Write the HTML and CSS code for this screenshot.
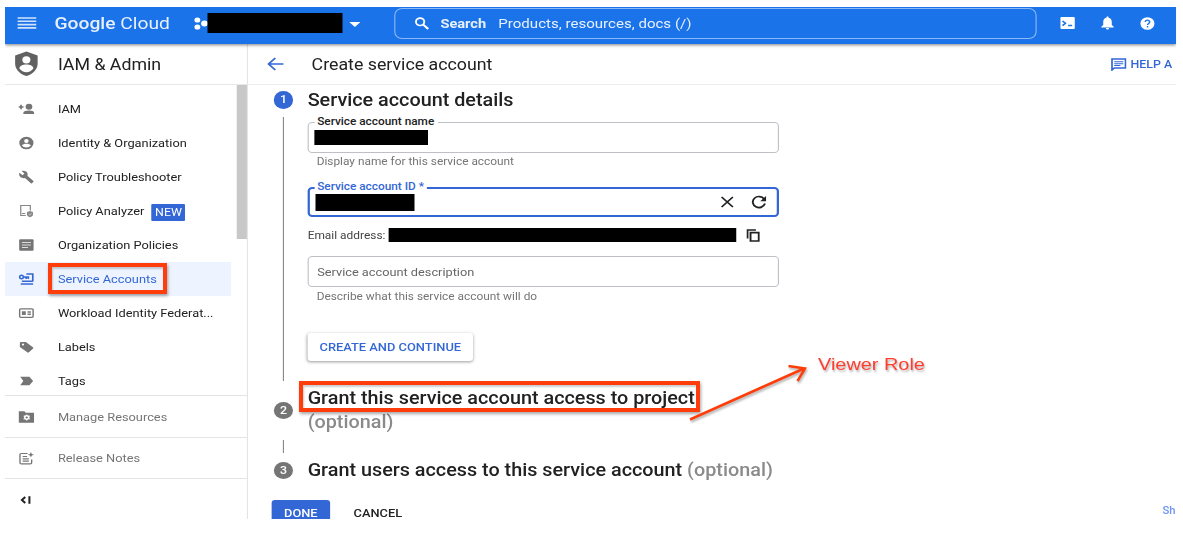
FILE: index.html
```html
<!DOCTYPE html>
<html lang="en">
<head>
<meta charset="utf-8">
<title>Create service account</title>
<link rel="stylesheet" href="styles.css">
</head>
<body>
<div class="console">
  <header class="topbar">
    <svg class="burger" width="17" height="12" viewBox="0 0 17 12"><path d="M0 1h17M0 4.300h17M0 7.600h17M0 10.900h17" stroke="#d2e3fc" stroke-width="1.600"/></svg>
    <div class="brand"><span class="t"><b>Google</b> Cloud</span></div>
    <svg class="dots" width="13" height="13" viewBox="0 0 13 13" fill="#fff"><circle cx="3" cy="3" r="2.600"/><circle cx="3" cy="10" r="2.600"/><circle cx="9.300" cy="6.500" r="3"/></svg>
    <div class="redact project"></div>
    <svg class="caret" width="10" height="5" viewBox="0 0 10 5"><path d="M0 0h10L5 5z" fill="#fff"/></svg>
    <div class="search">
      <svg width="13" height="13" viewBox="0 0 13 13" fill="none" stroke="#fff"><circle cx="5" cy="4.800" r="3.700" stroke-width="1.700"/><path d="M7.800 7.600l4.400 4.400" stroke-width="2"/></svg>
      <b class="t">Search</b><span class="t">Products, resources, docs (/)</span>
    </div>
    <svg class="shell" width="13" height="12" viewBox="0 0 13 12"><rect width="13" height="12" rx="1" fill="#fff"/><path d="M2 4l2.600 2.300L2 8.600" fill="none" stroke="#1a73e8" stroke-width="1.500"/><path d="M7 8.500h3.600" stroke="#1a73e8" stroke-width="1.500"/></svg>
    <svg class="bell" width="12" height="14" viewBox="0 0 12 14"><path d="M6 0.600c.7 0 1 .5 1 1.100C9 2.200 9.800 3.900 9.800 5.900v3.200l1.700 1.600v.7H.5v-.7l1.700-1.600V5.900c0-2 .8-3.700 2.800-4.200 0-.6.3-1.100 1-1.100zM4.700 12h2.600c0 1-.5 1.500-1.300 1.500S4.700 13 4.700 12z" fill="#fff"/></svg>
    <svg class="help" width="13" height="13" viewBox="0 0 13 13"><circle cx="6.500" cy="6.500" r="6.300" fill="#fff"/><path d="M4.600 5.100c0-2.600 3.900-2.500 3.900-.1 0 1.400-1.900 1.500-1.900 3M6.600 9v1.400" fill="none" stroke="#1a73e8" stroke-width="1.300"/></svg>
  </header>
  <div class="columns">
    <nav class="sidebar">
      <div class="product">
        <svg width="22" height="26" viewBox="0 0 22 26"><path d="M11 .5L21 4.400v8.100c0 6-4.200 10.700-10 12.500C5.200 23.200 1 18.500 1 12.500V4.400z" fill="#616161"/><circle cx="11" cy="8.800" r="3.600" fill="#fff"/><path d="M4.800 17.500c0-5.200 12.400-5.200 12.400 0-1.500 2.300-3.700 3.700-6.200 3.700s-4.700-1.400-6.200-3.700z" fill="#fff"/></svg>
        <span class="t">IAM &amp; Admin</span>
      </div>
      <div class="menu">
        <div class="items">
          <div class="item"><svg viewBox="0 0 14 14" fill="#757575"><circle cx="9.300" cy="4.800" r="3"/><path d="M4.300 12V10.800c0-3 9.700-3 9.700 0V12zM0 4.300h1.500V2.800h1.500v1.500h1.500v1.500H3v1.500H1.500V5.800H0z"/></svg><span class="t">IAM</span></div>
          <div class="item"><svg viewBox="0 0 14 14"><circle cx="7" cy="7" r="6.300" fill="#757575"/><circle cx="7" cy="5" r="2" fill="#fff"/><path d="M3 9.500c1-2.300 7-2.300 8 0-1.800 2.500-6.200 2.500-8 0z" fill="#fff"/></svg><span class="t">Identity &amp; Organization</span></div>
          <div class="item"><svg viewBox="0 0 24 24" fill="#757575"><path d="M22.700 19l-9.100-9.100c.9-2.300.4-5-1.500-6.900-2-2-5-2.400-7.400-1.300L9 6 6 9 1.600 4.700C.4 7.100.9 10.100 2.900 12.100c1.900 1.900 4.600 2.400 6.900 1.500l9.100 9.100c.4.4 1 .4 1.400 0l2.300-2.300c.5-.4.5-1.100.1-1.400z"/></svg><span class="t">Policy Troubleshooter</span></div>
          <div class="item"><svg viewBox="0 0 14 14" fill="none" stroke="#888"><path d="M6.500 11.500H2v-10h8.500v5M3 9.500h3" stroke-width="1.100"/><path d="M7.500 8l2.700-1 2.700 1v2.500c0 1.500-1.300 2.300-2.700 2.800-1.400-.5-2.700-1.300-2.700-2.800z" fill="#888" stroke="none"/><path d="M9 10l1 1 1.600-1.700" stroke="#fff" stroke-width=".5"/></svg><span class="t">Policy Analyzer</span><span class="badge"><span class="t">NEW</span></span></div>
          <div class="item"><svg viewBox="0 0 14 14"><rect x=".6" y="1.300" width="12.800" height="11.500" rx="1" fill="#757575"/><path d="M3 4.500h8M3 7h8M3 9.500h5.500" stroke="#ddd"/></svg><span class="t">Organization Policies</span></div>
          <div class="item active"><svg viewBox="0 0 14 14" fill="none" stroke="#3367d6" stroke-width="1.500"><circle cx="2.700" cy="5" r="1.700"/><path d="M4.500 5h4.200v2M6.800 5v2M7 2h5.700v7.500M3 9.200h9.700M2 12h11"/></svg><span class="t">Service Accounts</span></div>
          <div class="item"><svg viewBox="0 0 14 14"><rect x="1" y="2.800" width="12" height="8.500" rx="1" fill="none" stroke="#777" stroke-width="1.300"/><path d="M3 5.300h3.500V9H3zM8 5.300h3v1.400H8zM8 7.600h3V9H8z" fill="#777"/></svg><span class="t">Workload Identity Federat...</span></div>
          <div class="item"><svg viewBox="0 0 14 14"><path d="M1.200 3.300c0-.8.500-1.300 1.300-1.300h4.100l6.200 5.300c.5.500.5 1 0 1.500l-3.500 3.500c-.5.500-1 .5-1.500 0L1.200 7z" fill="#757575"/><circle cx="4" cy="4.500" r="1" fill="#fff"/></svg><span class="t">Labels</span></div>
          <div class="item"><svg viewBox="0 0 14 14"><path d="M1.500 2.700h8.200L13 7l-3.300 4.300H1.500L4.300 7z" fill="#757575"/></svg><span class="t">Tags</span></div>
        </div>
        <div class="scroll"></div>
      </div>
      <div class="foot"><svg viewBox="0 0 14 14"><path d="M.1 1.200h5.100l1.300 1.500h7.400v10H.1z" fill="#757575"/><circle cx="7.300" cy="7.500" r="1.700" fill="none" stroke="#fff" stroke-width="1.400"/><path d="M7.300 4.500v1.200M7.300 9.300v1.200M4.600 5.900l1 .6M9.100 8.500l1 .6M10.100 5.900l-1 .6M5.500 8.500l-1 .6" stroke="#fff"/></svg><span class="t">Manage Resources</span></div>
      <div class="foot"><svg viewBox="0 0 14 14" fill="none" stroke="#757575" stroke-width="1.200"><path d="M8 2.500H2.500c-.8 0-1.200.4-1.200 1.200v8c0 .8.400 1.200 1.200 1.200h8c.8 0 1.200-.4 1.200-1.200V8.500M3.700 5.500h4M3.700 7.800h5.500M3.700 10.200h5.500"/><path d="M11 1l.8 2 2 .8-2 .8-.8 2-.8-2-2-.8 2-.8z" fill="#757575" stroke="none"/></svg><span class="t">Release Notes</span></div>
      <div class="foot last"><svg viewBox="0 0 14 14" fill="none" stroke="#222" stroke-width="1.800"><path d="M6 4L3 7l3 3M9.700 3.300v7.400"/></svg></div>
    </nav>
    <main class="main">
      <div class="pagehead">
        <svg width="15" height="14" viewBox="0 0 15 14" fill="none" stroke="#3367d6" stroke-width="1.700"><path d="M14.500 7H1.500M7.300 1L1.300 7l6 6"/></svg>
        <span class="t title">Create service account</span>
        <svg class="chat" width="14" height="13" viewBox="0 0 14 13" fill="none" stroke="#3367d6"><path d="M1 12V1h12v9H3z" stroke-width="1.500"/><path d="M3 3.800h8M3 5.700h8M3 7.600h5.500"/></svg>
        <span class="t assist">HELP A</span>
      </div>
      <div class="stepper">
        <div class="rail"><i class="num on">1</i><i class="line"></i></div>
        <section class="details">
          <h2><span class="t">Service account details</span></h2>
          <div class="field"><label class="t">Service account name</label><div class="redact name"></div></div>
          <p class="hint first"><span class="t">Display name for this service account</span></p>
          <div class="field focus"><label class="t">Service account ID *</label><div class="redact ident"></div>
            <svg width="12" height="12" viewBox="0 0 12 12" stroke="#222" stroke-width="1.600"><path d="M1 1l10 10M11 1L1 11"/></svg>
            <svg class="reload" width="14" height="14" viewBox="0 0 14 14" fill="none" stroke="#222" stroke-width="1.700"><path d="M11.800 4A5.500 5.500 0 1 0 12.500 8.500"/><path d="M13.500 1v5.300H8.300z" fill="#222" stroke="none"/></svg>
          </div>
          <p class="email"><span class="t">Email address:</span><span class="redact mail"></span><svg width="12" height="13" viewBox="0 0 12 13" fill="none" stroke="#222" stroke-width="1.700"><path d="M1 9.500V1h7.500M3.700 3.700H11v8.300H3.700z"/></svg></p>
          <div class="field empty"><span class="t">Service account description</span></div>
          <p class="hint"><span class="t">Describe what this service account will do</span></p>
          <div class="continue"><span class="t">CREATE AND CONTINUE</span></div>
        </section>
        <div class="rail second"><i class="num">2</i><i class="line"></i></div>
        <section class="grant"><h2><span class="t">Grant this service account access to project</span><br><span class="t opt">(optional)</span></h2></section>
        <div class="rail"><i class="num">3</i></div>
        <section class="users"><h2 class="t">Grant users access to this service account <span class="opt">(optional)</span></h2></section>
      </div>
      <div class="actions"><div class="done"><span class="t">DONE</span></div><span class="t cancel">CANCEL</span><span class="t shortcut">Sh</span></div>
    </main>
  </div>
</div>
<div class="mark mark-account"></div>
<div class="mark mark-grant"></div>
<svg class="arrow" width="130" height="66" viewBox="0 0 130 66" fill="none" stroke="#ff3d0a" stroke-width="2.500"><path d="M5 59.500L119 8.500M103.500 6L120 8.500 112.500 21"/></svg>
<div class="note t">Viewer Role</div>
</body>
</html>
```
FILE: styles.css
```css
* { box-sizing: border-box; }
body { margin: 0; background: #fff; font-family: Roboto, "Liberation Sans", sans-serif; color: #212121; position: relative; }
svg { flex: none; display: block; }
.t { white-space: nowrap; }

/* The console is laid out at 1040px and widened horizontally. */
.console { width: 1040.500px; height: 511.500px; margin: 7px 0 0 5px; transform: scaleX(1.125); transform-origin: 0 0; overflow: hidden; display: flex; flex-direction: column; }
.redact { background: #000; flex: none; }

.topbar { height: 37px; flex: none; background: #1a73e8; color: #e8f0fe; display: flex; align-items: center; padding: 0 0 5px 11px; position: relative; z-index: 1; box-shadow: 0 1px 3px rgba(0,0,0,.5); }
.brand { margin-left: 16px; width: 124px; font-size: 17.100px; }
.brand b { font-weight: 500; }
.project { width: 120px; height: 20px; margin-left: -1px; }
.caret { margin-left: 6px; margin-top: 2px; }
.search { margin-left: 30px; width: 571px; height: 31px; border: 1px solid #8ab8f8; border-radius: 7px; display: flex; align-items: center; padding-left: 17px; font-size: 13.400px; }
.search b { margin-left: 10px; width: 51.500px; font-size: 13px; font-weight: 700; }
.shell { margin-left: 21px; }
.bell { margin-left: 23px; }
.help { margin-left: 23px; }

.columns { display: flex; flex: 1; min-height: 0; }
.sidebar { width: 216px; flex: none; border-right: 1.500px solid #e4e4e4; display: flex; flex-direction: column; }
.product { height: 41px; flex: none; border-bottom: 1px solid #e8e8e8; display: flex; align-items: center; padding-left: 8px; gap: 17px; font-size: 15.800px; }
.menu { height: 311px; flex: none; display: flex; justify-content: space-between; border-bottom: 1px solid #e4e4e4; }
.items { width: 201px; padding-top: 7px; }
.item { height: 34px; display: flex; align-items: center; padding-left: 12px; font-size: 11.400px; }
.item svg, .foot svg { width: 14px; height: 14px; margin-right: 21px; }
.active { background: #eef4ff; color: #3367d6; }
.badge { margin-left: 6.500px; width: 30px; height: 17px; margin-top: 2px; display: flex; align-items: center; justify-content: center; background: #3367d6; border-radius: 1px; color: #fff; font-size: 11px; }
.scroll { width: 9px; height: 154px; background: #c8c8c8; }
.foot { height: 41.500px; flex: none; border-bottom: 1px solid #e4e4e4; display: flex; align-items: center; padding: 1px 0 0 12px; font-size: 11.400px; color: #757575; }
.last { border: 0; }

.main { flex: 1; min-width: 0; display: flex; flex-direction: column; }
.pagehead { height: 41px; flex: none; border-bottom: 1px solid #eee; display: flex; align-items: center; padding-left: 17px; font-size: 15.800px; }
.title { margin-left: 24.500px; width: 710px; flex: none; }
.assist { font-size: 11px; font-weight: 500; color: #3367d6; margin-left: 4px; }
.stepper { display: grid; grid-template-columns: 17px 418.500px; column-gap: 13px; padding-left: 23px; grid-template-rows: 304.500px 66px 42px; height: 415px; flex: none; align-content: start; }
.rail { display: flex; flex-direction: column; align-items: center; padding-top: 6px; }
.second { padding-top: 12px; }
.num { width: 17.500px; height: 17.500px; border-radius: 50%; background: #757575; color: #fff; font: 500 11px/17.500px Roboto, sans-serif; text-align: center; flex: none; }
.on { background: #3367d6; }
.line { width: 1px; background: #8a8a8a; margin-top: 8px; height: 264px; }
.second .line { margin-top: 21px; height: 13px; }
h2 { margin: 0; font-size: 17.600px; font-weight: 500; line-height: 24px; }
.details h2 { height: 37px; padding-top: 3px; }
.grant h2 { margin-top: -3.500px; }
.opt { color: #8a8a8a; }
.field { height: 30.500px; border: 1.500px solid #bdc1c6; border-radius: 4px; display: flex; align-items: center; position: relative; padding-left: 5px; }
.field label { position: absolute; left: 4.500px; top: -8px; padding: 0 3px; background: #fff; font-size: 10.500px; font-weight: 500; line-height: 14px; }
.focus { border: 2px solid #3367d6; }
.focus label { color: #3367d6; left: 3.500px; top: -9px; }
.name { width: 101px; height: 15px; }
.ident { width: 88px; height: 18px; margin-right: 272px; }
.reload { margin-left: 15px; }
.hint { margin: 0; height: 34px; padding: 3px 0 0 8px; font-size: 10.550px; line-height: 14px; color: #757575; }
.first { padding-top: 2px; }
.email { margin: 0; height: 39px; padding-bottom: 3px; display: flex; align-items: center; font-size: 10.600px; color: #444; }
.mail { width: 309.500px; height: 14px; margin: 0 8.500px 0 2.500px; }
.empty { padding: 1px 0 0 7.500px; font-size: 11.350px; color: #666; }
.continue { margin-top: 12px; width: 147px; height: 28px; border-radius: 3px; box-shadow: 0 1px 3px rgba(0,0,0,.4); color: #3367d6; font-size: 11.450px; font-weight: 500; display: flex; align-items: center; justify-content: center; }
.users h2 { padding-top: 2px; }
.actions { display: flex; padding-left: 21px; font-size: 11.400px; font-weight: 500; flex: none; }
.done { width: 52px; height: 26px; background: #3367d6; color: #fff; border-radius: 3px 3px 0 0; display: flex; align-items: center; justify-content: center; }
.cancel { margin: 6px 0 0 21px; width: 719px; flex: none; }
.shortcut { margin-top: 5px; font-size: 10px; color: #6b95f5; }

/* Callouts drawn over the console. */
.mark { position: absolute; border: 4px solid #ff3d0a; box-shadow: 1px 2px 3px rgba(0,0,0,.35), inset 1px 2px 2px rgba(0,0,0,.2); }
.mark-account { left: 48px; top: 263px; width: 119px; height: 31px; }
.mark-grant { left: 299px; top: 381px; width: 401px; height: 31px; }
.arrow { position: absolute; left: 685px; top: 360px; filter: drop-shadow(1px 2px 1px rgba(0,0,0,.3)); }
.note { position: absolute; left: 818px; top: 355px; font: 17px/20px "Liberation Sans", sans-serif; color: #ff3d2e; text-shadow: 1px 2px 2px rgba(0,0,0,.3); transform: scaleX(1.17); transform-origin: 0 0; }
```
